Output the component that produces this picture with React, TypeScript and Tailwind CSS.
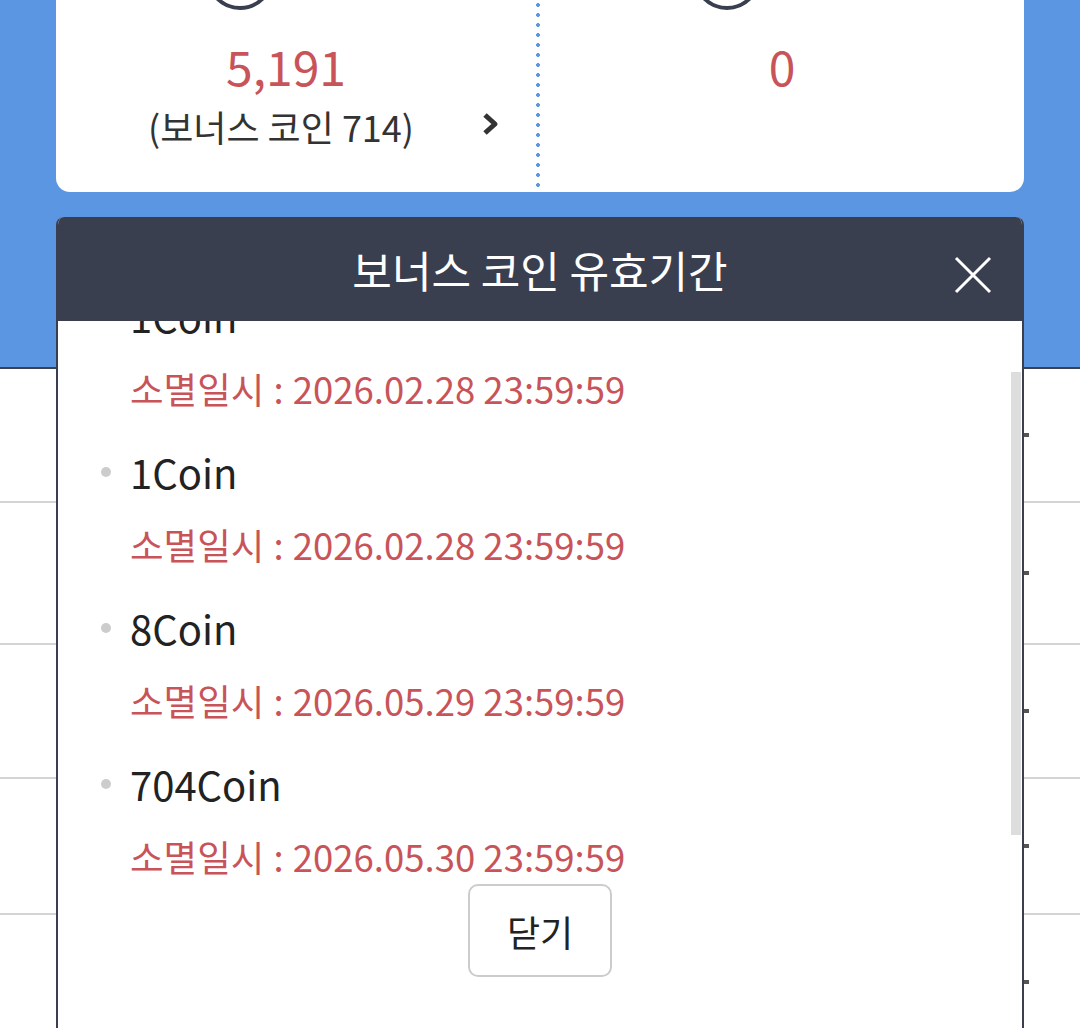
import React from "react";

const coins = [
  { amount: "1Coin", date: "2026.02.28 23:59:59" },
  { amount: "1Coin", date: "2026.02.28 23:59:59" },
  { amount: "8Coin", date: "2026.05.29 23:59:59" },
  { amount: "704Coin", date: "2026.05.30 23:59:59" },
];

const rows = ["h-[134px]", "h-[142px]", "h-[134px]", "h-[136px]", "h-[136px]"];

const Ring = () => (
  <svg width="72" height="72" viewBox="0 0 72 72" className="block">
    <circle cx="36" cy="36" r="32" fill="none" stroke="#3a3f50" strokeWidth="4" />
  </svg>
);

const App = () => {
  return (
    <div className="relative w-[1080px] h-[1028px] overflow-hidden bg-white font-['Noto_Sans_CJK_KR','Noto_Sans',sans-serif]">
      {/* blue summary area */}
      <div className="bg-[#5b96e3] h-[369px] px-[56px] border-b-2 border-[#3c4150]">
        <div className="flex h-[192px] bg-white rounded-b-[14px]">
          <div className="relative w-[480px] shrink-0 flex flex-col items-center pr-[20px]">
            <div className="-mt-[60px] mr-[92px]">
              <Ring />
            </div>
            <div className="mt-[23px] text-[48px] leading-[60px] text-[#c8545a]">5,191</div>
            <div className="mt-[11px] mr-[10px] text-[36px] leading-[40px] text-[#333]">(보너스 코인 714)</div>
            <svg width="20" height="24" viewBox="0 0 20 24" className="absolute left-[424px] top-[112px]">
              <polyline points="5,3 15,12 5,21" fill="none" stroke="#333" strokeWidth="5" strokeLinejoin="round" />
            </svg>
          </div>
          <div className="w-[4px] shrink-0 bg-[radial-gradient(circle,#5b96e3_1.6px,transparent_2.2px)] bg-[length:4px_10px]" />
          <div className="flex-1 flex flex-col items-center">
            <div className="-mt-[60px] mr-[110px]">
              <Ring />
            </div>
            <div className="mt-[23px] text-[48px] leading-[60px] text-[#c8545a]">0</div>
          </div>
        </div>
      </div>

      {/* list behind modal */}
      {rows.map((h, i) => (
        <div key={i} className={`${h} flex items-center justify-end border-b-2 border-[#d4d4d4]`}>
          <div className="mr-[51px] w-[5px] h-[4px] bg-[#555]" />
        </div>
      ))}

      {/* modal */}
      <div className="absolute left-[56px] top-[217px] w-[968px] h-[830px] rounded-t-[8px] overflow-hidden border-x-2 border-[#3a3f50] bg-white">
        <div className="relative h-[104px] bg-[#3a3f50] flex items-center justify-center">
          <h2 className="text-[43px] leading-none text-white">보너스 코인 유효기간</h2>
          <svg width="38" height="38" viewBox="0 0 38 38" className="absolute right-[30px] top-[39px]">
            <path d="M2 2 L36 36 M36 2 L2 36" stroke="#fff" strokeWidth="3" />
          </svg>
        </div>

        <div className="relative h-[559px] overflow-hidden">
          <ul className="-mt-[29px] pl-[72px]">
            {coins.map((c, i) => (
              <li key={i} className="relative h-[156px]">
                <span className="absolute -left-[29px] top-[19px] w-[10px] h-[10px] rounded-full bg-[#cccccc]" />
                <div className="h-[48px] text-[40px] leading-[48px] text-[#222]">{c.amount}</div>
                <div className="mt-[25px] h-[48px] text-[36.5px] leading-[48px] text-[#c8545a]">
                  소멸일시 <span className="mx-[1px]">:</span> {c.date}
                </div>
              </li>
            ))}
          </ul>
          <div className="absolute left-[953px] top-[51px] w-[10px] h-[463px] bg-[#dddddd]" />
        </div>

        <div className="flex justify-center mt-[4px]">
          <button className="w-[144px] h-[93px] rounded-[10px] border-2 border-[#cccccc] bg-white text-[36px] text-[#222]">
            닫기
          </button>
        </div>
      </div>
    </div>
  );
};

export default App;
